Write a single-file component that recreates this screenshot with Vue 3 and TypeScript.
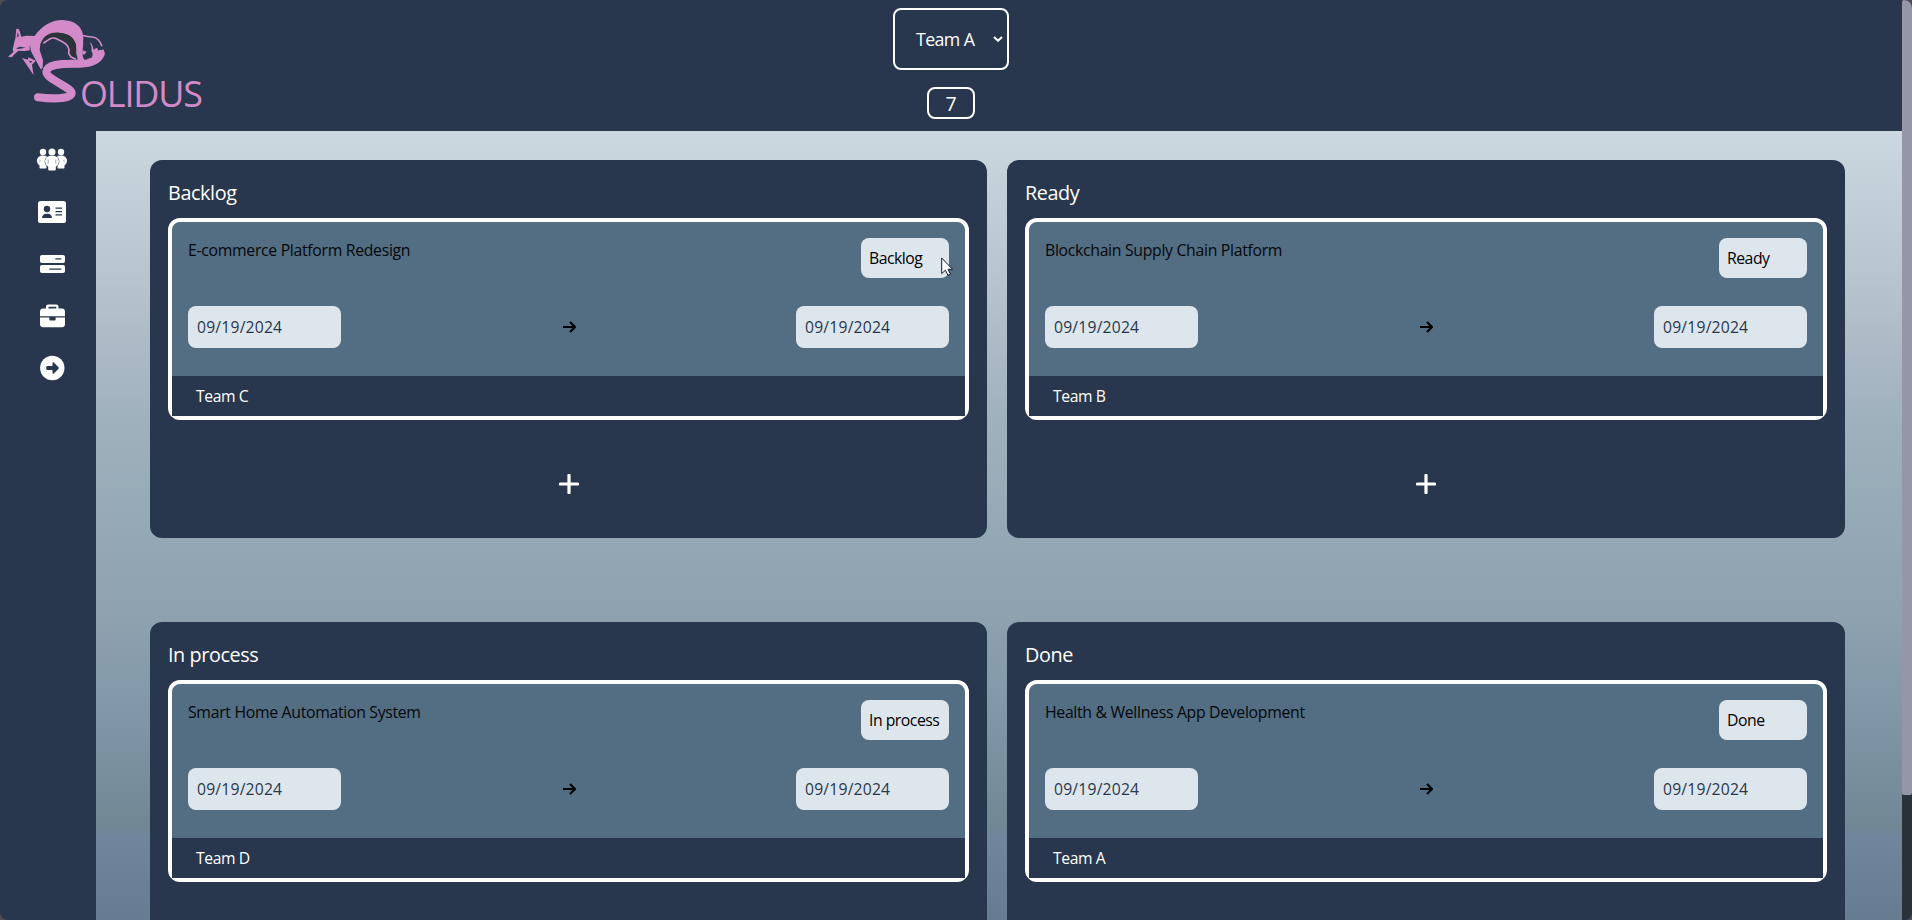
<script setup lang="ts">
interface Board {
  title: string
  project: string
  team: string
}

const boards: Board[] = [
  { title: 'Backlog', project: 'E-commerce Platform Redesign', team: 'Team C' },
  { title: 'Ready', project: 'Blockchain Supply Chain Platform', team: 'Team B' },
  { title: 'In process', project: 'Smart Home Automation System', team: 'Team D' },
  { title: 'Done', project: 'Health & Wellness App Development', team: 'Team A' },
]
const date = '09/19/2024'
</script>

<template>
  <div class="app">
    <div class="page">
      <header class="header">
        <div class="logo">
          <svg class="fox" viewBox="0 0 330 330" aria-hidden="true">
            <path class="swirl" d="M114 292 C155 297 208 297 215 281 C220 264 139 238 139 216 C142 188 195 192 240 191 C276 190 294 181 302 162" />
            <path class="pink" d="M104 107 C126 78 153 60 187 60 C223 61 246 79 249 106 C254 137 242 158 251 176 L262 190 L205 197 L211 179 L232 181 C235 170 227 164 229 155 L228 133 C220 111 200 99 176 99 C149 99 130 113 121 133 L119 150 L129 181 L128 204 L122 208 L96 160 C90 145 88 131 93 122 Z" />
            <path class="dark" d="M121 135 C130 103 153 96 178 98 C207 100 225 114 227 136 C225 149 223 158 228 173 C219 173 210 171 205 169 L212 156 C211 139 198 122 188 118 C165 104 145 123 121 135 Z" />
            <path class="pink" d="M49 86 L57 88 L64 110 L79 107 L106 108 C95 124 85 138 90 151 L73 153 L55 152 L41 165 L36 172 L24 170 L40 156 L38 149 L43 125 L46 116 Z" />
            <path class="pink" d="M66 174 L84 179 L85 172 L107 182 L96 194 L101 226 L83 199 Z" />
            <path class="hole" d="M53 97 L57 108 L51 112 Z M48 145 L60 140 L77 143 L55 147 Z M86 182 L97 184 L92 189 Z" />
            <path class="line" d="M130 130 C146 118 154 111 166 115 L183 123 C196 129 211 140 206 160 L213 171 L228 178" />
            <path class="hole" d="M249 122 C264 116 276 124 280 134 C274 146 276 156 272 166 C268 174 262 180 254 180 C248 160 256 146 249 122 Z" />
            <path class="line" d="M246 106 C258 110 266 111 278 111 C292 113 300 122 306 139" />
            <path class="pink" d="M269 126 C280 134 278 144 282 150 C286 143 290 142 293 146 C296 152 292 156 296 158 L309 148 C315 152 313 162 309 170 C300 186 284 196 262 192 C275 178 283 164 274 153 C276 147 275 137 269 126 Z M248 151 L260 155 L252 165 L246 160 Z" />
          </svg>
          <span class="brand">OLIDUS</span>
        </div>
        <div class="controls">
          <div class="team-select">
            <span class="txt">Team A</span>
            <svg class="chevron" viewBox="0 0 10 6"><path d="M1 1 L5 4.8 L9 1" /></svg>
          </div>
          <div class="count">7</div>
        </div>
      </header>

      <div class="body">
        <nav class="sidebar">
          <svg viewBox="0 0 32 24" class="nav-icon">
            <g fill="#fff">
              <circle cx="7" cy="4" r="3.2" /><circle cx="25" cy="4" r="3.2" />
              <path d="M7 7.6c3.500 0 6 2 6 5.200 0 2.200-1 3.600-2.500 4.600V19.500c0 .6-.4 1-1 1h-5c-.6 0-1-.4-1-1v-2.300C2 16.300 1 15 1 12.800 1 9.600 3.500 7.600 7 7.600zM25 7.600c3.500 0 6 2 6 5.200 0 2.200-1 3.500-2.500 4.400v2.300c0 .6-.4 1-1 1h-5c-.6 0-1-.4-1-1v-2.100c-1.500-1-2.500-2.400-2.500-4.600 0-3.200 2.500-5.200 6-5.200z" />
            </g>
            <g class="front">
              <path d="M16 7.600c4 0 6.800 2.300 6.800 5.900 0 2.400-1.200 4.200-3 5.200v2.600c0 .8-.5 1.300-1.300 1.300h-5c-.8 0-1.300-.5-1.300-1.300v-2.600c-1.800-1-3-2.800-3-5.200 0-3.600 2.800-5.900 6.800-5.900z" />
              <circle cx="16" cy="4" r="3.500" />
            </g>
            <path d="M12.200 11.500v4M19.800 11.500v4M4 11.700v2M28 11.700v2" stroke="#8793a3" stroke-width=".8" />
          </svg>
          <svg viewBox="0 0 32 24" class="nav-icon">
            <rect x="2" y="1" width="28" height="22" rx="2.600" fill="#fff" />
            <g class="cut">
              <circle cx="11" cy="9" r="3.200" />
              <path d="M6 18c0-2.600 1.800-4.300 4-4.300h2c2.200 0 4 1.700 4 4.300z" />
              <path d="M19.500 7.500h6.500v1.200h-6.500zM19.500 11h6.500v1.200h-6.500zM19.500 14.200h6.500v1.200h-6.500z" />
            </g>
          </svg>
          <svg viewBox="0 0 32 24" class="nav-icon">
            <rect x="4" y="3" width="25" height="8" rx="2" fill="#fff" />
            <rect x="4" y="13" width="25" height="8" rx="2" fill="#fff" />
            <path class="cut" d="M19.300 6.200h6v1.300h-6zM13.300 16.500h12v1.300h-12z" />
          </svg>
          <svg viewBox="0 0 32 24" class="nav-icon">
            <path fill="#fff" d="M10 4.500V2.800C10 1.300 11 .5 12.300.5h8C21.600.5 22.500 1.300 22.500 2.800v1.700H26c1.700 0 3 1.300 3 3V12.300H4V7.500c0-1.700 1.300-3 3-3zM12.500 4.500h7.800V2.800h-7.800zM4 13.500h9.300v1.800c0 .8.500 1.300 1.300 1.300h3.700c.8 0 1.300-.5 1.300-1.300v-1.800H29v6.700c0 1.700-1.300 3-3 3H7c-1.700 0-3-1.300-3-3z" fill-rule="evenodd" />
          </svg>
          <svg viewBox="0 0 32 24" class="nav-icon">
            <circle cx="16.300" cy="12" r="12.200" fill="#fff" />
            <path class="cut" d="M11.500 10h5V7.200c0-.8.800-1.200 1.400-.6l4.600 4.600c.5.500.5 1.100 0 1.600l-4.600 4.600c-.6.600-1.400.2-1.400-.6V14h-5c-.8 0-1.200-.4-1.200-1.200v-1.600c0-.8.4-1.200 1.200-1.200z" />
          </svg>
        </nav>

        <main class="board">
          <section v-for="b in boards" :key="b.title" class="panel">
            <h2 class="panel-title">{{ b.title }}</h2>
            <article class="card">
              <div class="card-body">
                <div class="row">
                  <span class="project">{{ b.project }}</span>
                  <span class="status">{{ b.title }}</span>
                </div>
                <div class="row dates">
                  <span class="date">{{ date }}</span>
                  <svg class="arrow" viewBox="0 0 14 12"><path d="M1 6 H12.500 M8 1 L13 6 L8 11" /></svg>
                  <span class="date">{{ date }}</span>
                </div>
              </div>
              <div class="card-foot">{{ b.team }}</div>
            </article>
            <div class="add">
              <svg viewBox="0 0 20 20"><path d="M10 1.300V18.700M1.300 10H18.700" /></svg>
            </div>
          </section>
        </main>
      </div>
    </div>
    <div class="scrollbar"><div class="thumb"></div></div>
    <svg class="cursor" viewBox="0 0 12 19"><path d="M.7 1 V16.600 L4.400 13.200 L7 18.300 L9.500 17.100 L7 12.300 H11.500 Z" /></svg>
  </div>
</template>

<style>
html,
body {
  margin: 0;
  overflow: hidden;
  background: #4f4d50;
}
</style>

<style scoped>
* {
  box-sizing: border-box;
}
.app {
  position: relative;
  display: flex;
  width: 100%;
  height: 920px;
  overflow: hidden;
  border-radius: 8px;
  background: #28374d;
  color: #fff;
  font-family: 'Open Sans', 'Noto Sans', sans-serif;
}
.page {
  flex: 1;
  height: 920px;
  overflow: hidden;
}
.header {
  display: grid;
  grid-template-columns: 1fr auto 1fr;
  height: 131px;
}
.logo {
  display: flex;
  align-items: flex-start;
}
.fox {
  flex: none;
  width: 110px;
  height: 110px;
}
.brand {
  margin: 69px 0 0 -30px;
  color: #d28bc8;
  font-size: 36px;
  line-height: 50px;
  letter-spacing: -1.2px;
}
.swirl {
  fill: none;
  stroke: #d28bc8;
  stroke-width: 24;
  stroke-linecap: round;
}
.pink {
  fill: #d28bc8;
}
.dark {
  fill: #2a3439;
}
.hole {
  fill: #28374d;
}
.line {
  fill: none;
  stroke: #d28bc8;
  stroke-width: 5;
}
.controls {
  display: flex;
  flex-direction: column;
  align-items: center;
  gap: 17px;
  padding-top: 8px;
}
.team-select {
  display: flex;
  align-items: center;
  justify-content: space-between;
  width: 116px;
  height: 62px;
  padding: 0 4px 0 21px;
  border: 2px solid #fff;
  border-radius: 8px;
  font-size: 17.8px;
}
.txt {
  letter-spacing: -0.6px;
}
.chevron {
  width: 10px;
  height: 6px;
  fill: none;
  stroke: #fff;
  stroke-width: 2;
}
.count {
  width: 48px;
  height: 32px;
  border: 2px solid #fff;
  border-radius: 8px;
  font-size: 19.5px;
  line-height: 30px;
  text-align: center;
}
.body {
  display: flex;
  height: 789px;
}
.sidebar {
  display: flex;
  flex-direction: column;
  gap: 28px;
  width: 96px;
  padding: 17px 0 0 36px;
}
.nav-icon {
  flex: none;
  width: 32px;
  height: 24px;
  overflow: visible;
}
.cut {
  fill: #28374d;
}
.front {
  fill: #fff;
  stroke: #28374d;
  stroke-width: 1;
  paint-order: stroke;
}
.board {
  flex: 1;
  display: grid;
  grid-template-columns: 837px 838px;
  grid-auto-rows: 378px;
  gap: 84px 20px;
  padding: 29px 57px 0 54px;
  background: linear-gradient(180deg, #ccd7df 0, #bac7d0 130px, #aab8c5 230px, #9db0bc 300px, #8da1af 490px, #8096a7 590px, #718794 696px, #6f869c 706px, #667c91 789px);
}
.panel {
  padding: 18px;
  border-radius: 12px;
  background: #28374d;
}
.panel-title {
  height: 40px;
  margin: 0;
  font-size: 19.8px;
  font-weight: 400;
  line-height: 29px;
  letter-spacing: -0.4px;
}
.card {
  height: 202px;
  border: 4px solid #fff;
  border-radius: 12px;
  background: #536d82;
}
.card-body {
  height: 154px;
  padding: 16px;
}
.row {
  display: flex;
  justify-content: space-between;
}
.project {
  color: #05080b;
  font-size: 15.8px;
  line-height: 24px;
  letter-spacing: -0.31px;
}
.status,
.date {
  border-radius: 8px;
  background: #dee6ed;
}
.status {
  width: 88px;
  height: 40px;
  padding-left: 8px;
  color: #000;
  font-size: 15.8px;
  line-height: 40px;
  letter-spacing: -0.5px;
  white-space: nowrap;
}
.dates {
  align-items: center;
  margin-top: 28px;
}
.date {
  width: 153px;
  height: 42px;
  padding-left: 9px;
  color: #28374d;
  font-size: 15.7px;
  line-height: 42px;
  letter-spacing: 0.2px;
}
.arrow {
  width: 14px;
  height: 12px;
  fill: none;
  stroke: #000;
  stroke-width: 2.2;
}
.card-foot {
  height: 40px;
  padding-left: 24px;
  background: #28374d;
  font-size: 15.7px;
  line-height: 40px;
  letter-spacing: -0.4px;
}
.add {
  display: flex;
  justify-content: center;
  padding-top: 54px;
}
.add svg {
  width: 20px;
  height: 20px;
  fill: none;
  stroke: #fff;
  stroke-width: 3.2;
  stroke-linecap: round;
}
.scrollbar {
  width: 10px;
  background: #293239;
}
.thumb {
  height: 795px;
  border-radius: 2px;
  background: #9696a9;
}
.cursor {
  position: absolute;
  top: 257px;
  left: 941px;
  width: 12px;
  height: 19px;
  fill: #fff;
  stroke: #111827;
  stroke-width: 1;
}
</style>
